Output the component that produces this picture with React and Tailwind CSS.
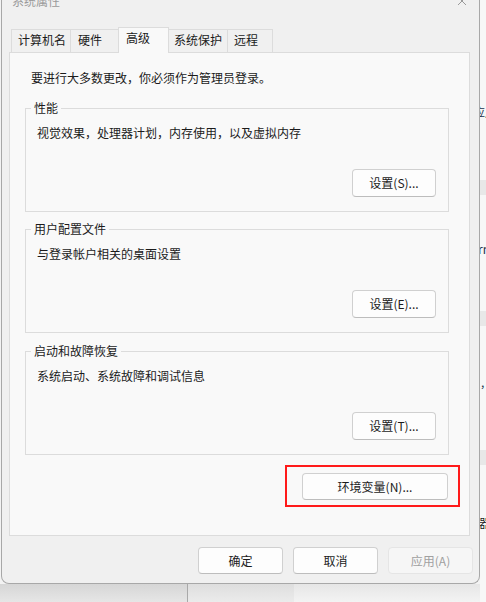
import React from "react";

const tabs = [
  { label: "计算机名", w: "w-[60px]", pl: "pl-[6px]" },
  { label: "硬件", w: "w-[49px]", pl: "pl-[7px]" },
  { label: "高级", w: "w-[51px]", pl: "pl-[7px]", active: true },
  { label: "系统保护", w: "w-[60px]", pl: "pl-[5px]" },
  { label: "远程", w: "w-[46px]", pl: "pl-[6px]" }
];

const groups = [
  { title: "性能", desc: "视觉效果，处理器计划，内存使用，以及虚拟内存", btn: "设置(S)...", mt: "mt-[14px]" },
  { title: "用户配置文件", desc: "与登录帐户相关的桌面设置", btn: "设置(E)...", mt: "mt-[9px]" },
  { title: "启动和故障恢复", desc: "系统启动、系统故障和调试信息", btn: "设置(T)...", mt: "mt-[10px]" }
];

function Tab({ tab }) {
  if (tab.active) {
    return (
      <div
        className={`relative z-10 -mb-px -ml-px flex h-[26px] ${tab.w} ${tab.pl} items-start border border-b-0 border-[#dcdcdc] bg-[#f9f9f9] pt-[2px]`}
      >
        {tab.label}
      </div>
    );
  }
  return (
    <div
      className={`-ml-px flex h-[23px] ${tab.w} ${tab.pl} items-start border border-b-0 border-[#dcdcdc] bg-[#f0f0f0] pt-[2px] first:ml-0`}
    >
      {tab.label}
    </div>
  );
}

function Btn({ children, className = "", disabled }) {
  return (
    <button
      className={`flex items-center justify-center rounded-[4px] border ${
        disabled ? "border-[#e5e5e5] bg-[#f6f6f6] text-[#a0a0a0]" : "border-[#d0d0d0] border-b-[#bdbdbd] bg-[#fdfdfd] text-[#1b1b1b]"
      } ${className}`}
    >
      {children}
    </button>
  );
}

function Group({ g }) {
  return (
    <fieldset className={`${g.mt} ml-[15px] w-[424px] border border-[#dcdcdc]`}>
      <legend className="ml-[5px] px-[3px] leading-[16px]">{g.title}</legend>
      <div className="mt-[9px] pl-[11px]">{g.desc}</div>
      <div className="mt-[28px] flex justify-end pr-[12px] pb-[14px]">
        <Btn className="h-[28px] w-[84px]">{g.btn}</Btn>
      </div>
    </fieldset>
  );
}

function RightStrip() {
  return (
    <div className="flex w-[6px] flex-col overflow-hidden bg-[#f7f7f7] text-[12px] leading-[16px] text-[#23324d]">
      <div className="h-[104px] shrink-0" />
      <div className="h-[16px] shrink-0 overflow-hidden whitespace-nowrap">
        <span className="-ml-[7px] inline-block">应用</span>
      </div>
      <div className="h-[60px] shrink-0" />
      <div className="h-[15px] shrink-0 bg-[#e8e8e8]" />
      <div className="h-[46px] shrink-0" />
      <div className="h-[16px] shrink-0 overflow-hidden whitespace-nowrap">
        <span className="-ml-[2px] inline-block">rm</span>
      </div>
      <div className="h-[54px] shrink-0" />
      <div className="h-[15px] shrink-0 bg-[#e8e8e8]" />
      <div className="h-[48px] shrink-0" />
      <div className="h-[16px] shrink-0 overflow-hidden whitespace-nowrap">
        <span className="ml-[1px] inline-block">,</span>
      </div>
      <div className="h-[60px] shrink-0" />
      <div className="h-[15px] shrink-0 bg-[#e8e8e8]" />
      <div className="h-[50px] shrink-0" />
      <div className="h-[16px] shrink-0 overflow-hidden whitespace-nowrap text-[#1b1b1b]">
        <span className="-ml-[1px] inline-block">器</span>
      </div>
    </div>
  );
}

export default function App() {
  return (
    <div className="flex h-[602px] w-[486px] overflow-hidden bg-[#f3f3f3] font-['Noto_Sans_CJK_SC','Microsoft_YaHei',sans-serif] text-[12px] leading-[16px] text-[#1b1b1b]">
      <div className="flex w-[480px] shrink-0 flex-col">
        <div className="ml-[1px] flex h-[584px] w-[479px] shrink-0 flex-col rounded-b-[8px] border border-t-0 border-[#a8a8a8] bg-[#f0f0f0]">
          <div className="flex h-[27px] shrink-0 items-start justify-between overflow-hidden">
            <div className="-mt-[7px] ml-[10px] text-[#9a9a9a]">系统属性</div>
            <svg
              className="-mt-[4px] mr-[12px]"
              width="10"
              height="10"
              viewBox="0 0 10 10"
              fill="none"
              stroke="#9a9a9a"
              strokeWidth="1"
            >
              <path d="M1 1 L9 9 M9 1 L1 9" />
            </svg>
          </div>

          <div className="flex h-[25px] shrink-0 items-end pl-[9px]">
            {tabs.map((t) => (
              <Tab
                key={t.label}
                tab={t}
              />
            ))}
          </div>

          <div className="ml-[7px] flex h-[484px] w-[461px] shrink-0 flex-col border border-[#dcdcdc] bg-[#f9f9f9]">
            <div className="mt-[17px] pl-[21px]">要进行大多数更改，你必须作为管理员登录。</div>
            {groups.map((g) => (
              <Group
                key={g.title}
                g={g}
              />
            ))}
            <div className="mt-[10px] flex justify-end pr-[9px]">
              <div className="border-2 border-[#ff1a1a] pt-[6px] pr-[10px] pb-[5px] pl-[15px]">
                <Btn className="h-[27px] w-[146px]">环境变量(N)...</Btn>
              </div>
            </div>
          </div>

          <div className="mt-[11px] flex justify-end gap-[10px] pr-[6px]">
            <Btn className="h-[27px] w-[85px]">确定</Btn>
            <Btn className="h-[27px] w-[85px]">取消</Btn>
            <Btn
              disabled
              className="h-[27px] w-[85px]"
            >
              应用(A)
            </Btn>
          </div>
        </div>

        <div className="flex flex-1">
          <div className="w-[187px] bg-gradient-to-b from-[#d6d6d6] to-[#e6e6e6]" />
          <div className="w-px bg-[#a9a9a9]" />
          <div className="w-[106px] bg-gradient-to-b from-[#dedede] to-[#ebebeb]" />
          <div className="flex-1 bg-gradient-to-b from-[#e6e6e6] to-[#f3f3f3]" />
        </div>
      </div>
      <RightStrip />
    </div>
  );
}
